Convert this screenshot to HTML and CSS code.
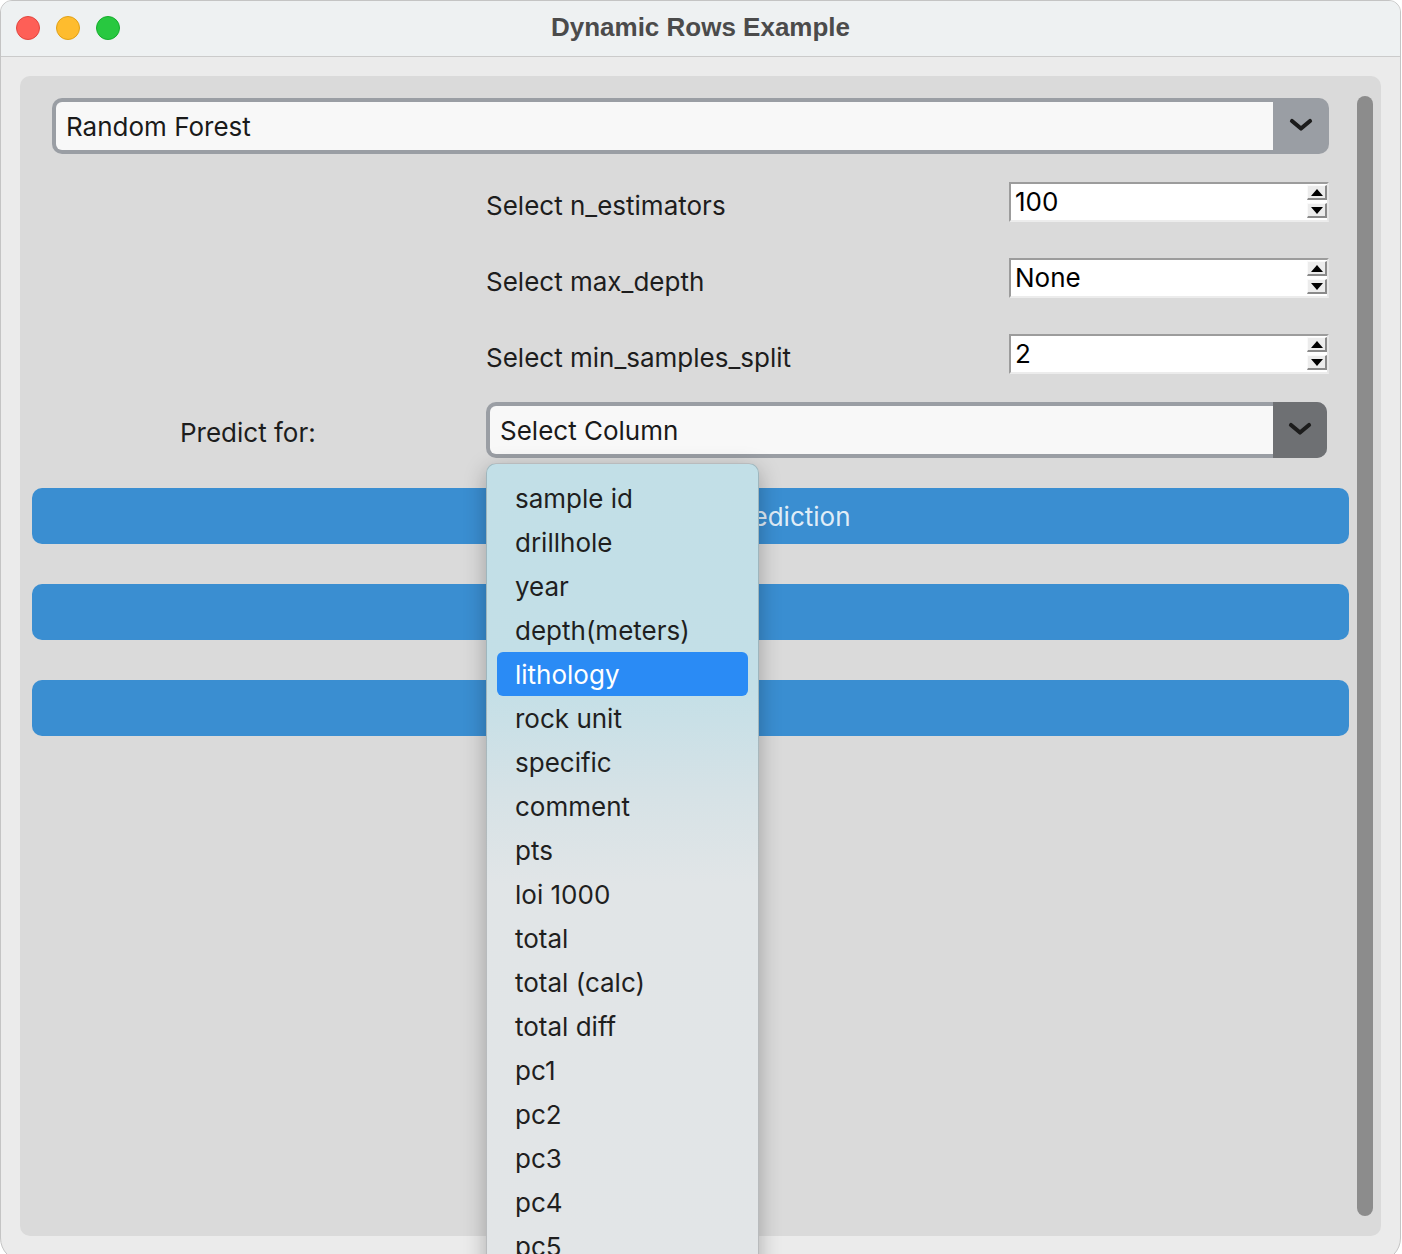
FILE: index.html
```html
<!DOCTYPE html>
<html>
<head>
<meta charset="utf-8">
<title>Dynamic Rows Example</title>
<link rel="stylesheet" href="styles.css">
</head>
<body>
<div class="window">
  <div class="titlebar">
    <div class="lights">
      <span class="light red"></span>
      <span class="light yellow"></span>
      <span class="light green"></span>
    </div>
    <div class="title">Dynamic Rows Example</div>
  </div>
  <div class="content">
    <div class="panel">
      <div class="main">
        <div class="combo combo-model">
          <div class="combo-field">Random Forest</div>
          <div class="combo-arrow">
            <svg width="26" height="16" viewBox="0 0 26 16"><path d="M4 4 L13 11.5 L22 4" fill="none" stroke="#1c1c1c" stroke-width="4.2" stroke-linecap="round" stroke-linejoin="round"/></svg>
          </div>
        </div>

        <div class="form">
          <div class="spin-row">
            <span class="spin-label">Select n_estimators</span>
            <div class="spin">
              <span class="spin-value">100</span>
              <div class="spin-buttons">
                <span class="spin-btn"><span class="tri up"></span></span>
                <span class="spin-btn"><span class="tri down"></span></span>
              </div>
            </div>
          </div>
          <div class="spin-row">
            <span class="spin-label">Select max_depth</span>
            <div class="spin">
              <span class="spin-value">None</span>
              <div class="spin-buttons">
                <span class="spin-btn"><span class="tri up"></span></span>
                <span class="spin-btn"><span class="tri down"></span></span>
              </div>
            </div>
          </div>
          <div class="spin-row">
            <span class="spin-label">Select min_samples_split</span>
            <div class="spin">
              <span class="spin-value">2</span>
              <div class="spin-buttons">
                <span class="spin-btn"><span class="tri up"></span></span>
                <span class="spin-btn"><span class="tri down"></span></span>
              </div>
            </div>
          </div>
          <div class="predict-row">
            <span class="predict-label">Predict for:</span>
            <div class="combo combo-col">
              <div class="combo-field">Select Column</div>
              <div class="combo-arrow dark">
                <svg width="26" height="16" viewBox="0 0 26 16"><path d="M4 4 L13 11.5 L22 4" fill="none" stroke="#1c1c1c" stroke-width="4.2" stroke-linecap="round" stroke-linejoin="round"/></svg>
              </div>
            </div>
          </div>
        </div>

        <div class="buttons">
          <div class="btn">Train and Make Prediction</div>
          <div class="btn"></div>
          <div class="btn"></div>
        </div>
      </div>
      <div class="scrollbar"></div>
    </div>
  </div>

  <div class="popup">
    <div class="item">sample id</div>
    <div class="item">drillhole</div>
    <div class="item">year</div>
    <div class="item">depth(meters)</div>
    <div class="item selected">lithology</div>
    <div class="item">rock unit</div>
    <div class="item">specific</div>
    <div class="item">comment</div>
    <div class="item">pts</div>
    <div class="item">loi 1000</div>
    <div class="item">total</div>
    <div class="item">total (calc)</div>
    <div class="item">total diff</div>
    <div class="item">pc1</div>
    <div class="item">pc2</div>
    <div class="item">pc3</div>
    <div class="item">pc4</div>
    <div class="item">pc5</div>
  </div>
</div>
</body>
</html>
```

FILE: styles.css
```css
* { box-sizing: border-box; }

html, body {
  margin: 0;
  padding: 0;
  background: #ffffff;
  overflow: hidden;
}

body {
  font-family: "Inter", "Liberation Sans", sans-serif;
  font-size: 26px;
  color: #1d1d1d;
}

.window {
  position: relative;
  width: 1401px;
  height: 1262px;
  background: #ebebeb;
  border: 1px solid #c4c4c4;
  border-radius: 12px 12px 24px 24px;
  overflow: hidden;
}

.titlebar {
  position: relative;
  height: 56px;
  background: #eef1f2;
  border-bottom: 1px solid #cbcbcb;
  display: flex;
  align-items: center;
  justify-content: center;
}

.lights {
  position: absolute;
  left: 15px;
  top: 15px;
  display: flex;
  gap: 16px;
}

.light {
  width: 24px;
  height: 24px;
  border-radius: 50%;
  display: block;
}
.light.red { background: #fe5f57; border: 1px solid #e2463f; }
.light.yellow { background: #febc2e; border: 1px solid #e1a116; }
.light.green { background: #28c840; border: 1px solid #14ae2c; }

.title {
  font-family: "Liberation Sans", "Inter", sans-serif;
  font-weight: bold;
  font-size: 26px;
  color: #4b4b4b;
  margin-top: -2px;
}

.content {
  padding: 19px 19px 0 19px;
}

.panel {
  height: 1160px;
  background: #dadada;
  border-radius: 10px;
  padding: 20px 8px 20px 12px;
  display: flex;
  gap: 8px;
}

.main {
  flex: 1;
  display: flex;
  flex-direction: column;
  padding-top: 2px;
}

.scrollbar {
  width: 16px;
  background: #8c8c8c;
  border-radius: 8px;
}

/* combo boxes */
.combo {
  display: flex;
  height: 56px;
  background: #9a9ea4;
  border-radius: 10px;
  padding: 4px 0 4px 4px;
}

.combo-model {
  margin: 0 20px;
}

.combo-field {
  flex: 1;
  background: #f8f8f8;
  border-radius: 6px 0 0 6px;
  display: flex;
  align-items: center;
  padding-left: 10px;
  color: #1a1a1a;
}

.combo-arrow {
  width: 56px;
  display: flex;
  align-items: center;
  justify-content: center;
  margin: -4px 0;
  border-radius: 0 10px 10px 0;
  padding-bottom: 2px;
}

.combo-arrow.dark {
  background: #6e7073;
  width: 54px;
}

/* form */
.form {
  margin-top: 28px;
  display: flex;
  flex-direction: column;
  gap: 36px;
}

.spin-row {
  display: flex;
  align-items: center;
  height: 40px;
  padding-left: 454px;
  padding-right: 20px;
}

.spin-label {
  flex: 1;
  padding-top: 6px;
}

.spin {
  width: 320px;
  height: 40px;
  background: #ffffff;
  border-top: 2px solid #9c9c9c;
  border-left: 2px solid #9c9c9c;
  border-right: 2px solid #e6e6e6;
  border-bottom: 2px solid #ececec;
  display: flex;
  align-items: center;
  padding-left: 4px;
}

.spin-value {
  flex: 1;
  color: #000;
  font-size: 26px;
  margin-top: -1px;
}

.spin-buttons {
  display: flex;
  flex-direction: column;
  gap: 3px;
  align-self: flex-start;
  margin-top: 1px;
}

.spin-btn {
  width: 20px;
  height: 15px;
  background: #ececec;
  border-top: 1px solid #fafafa;
  border-left: 1px solid #fafafa;
  border-right: 2px solid #8a8a8a;
  border-bottom: 2px solid #8a8a8a;
  display: flex;
  align-items: center;
  justify-content: center;
}

.tri {
  width: 0;
  height: 0;
  border-left: 6px solid transparent;
  border-right: 6px solid transparent;
}
.tri.up { border-bottom: 7px solid #000; }
.tri.down { border-top: 7px solid #000; }

.predict-row {
  margin-top: -8px;
  display: flex;
  align-items: center;
  padding-right: 22px;
}

.predict-label {
  width: 454px;
  padding-left: 148px;
  padding-top: 4px;
}

.combo-col {
  flex: 1;
}

/* buttons */
.buttons {
  margin-top: 30px;
  display: flex;
  flex-direction: column;
  gap: 40px;
}

.btn {
  height: 56px;
  background: #3a8ed1;
  border-radius: 10px;
  display: flex;
  align-items: center;
  justify-content: center;
  color: rgba(255, 255, 255, 0.86);
}

/* dropdown popup */
.popup {
  position: absolute;
  left: 485px;
  top: 462px;
  width: 273px;
  height: 820px;
  border: 1px solid rgba(0, 0, 0, 0.18);
  border-radius: 10px;
  background: linear-gradient(to bottom, #c2dfe7 0px, #c3dfe7 220px, #d6e2e6 330px, #e1e5e7 420px, #e2e5e7 100%);
  box-shadow: 0 6px 22px rgba(0, 0, 0, 0.28);
  padding: 12px 10px;
  z-index: 10;
}

.item {
  height: 44px;
  display: flex;
  align-items: center;
  padding-left: 18px;
  color: #1f1f1f;
  border-radius: 6px;
}

.item.selected {
  background: #2a8bf5;
  color: #ffffff;
}
```
